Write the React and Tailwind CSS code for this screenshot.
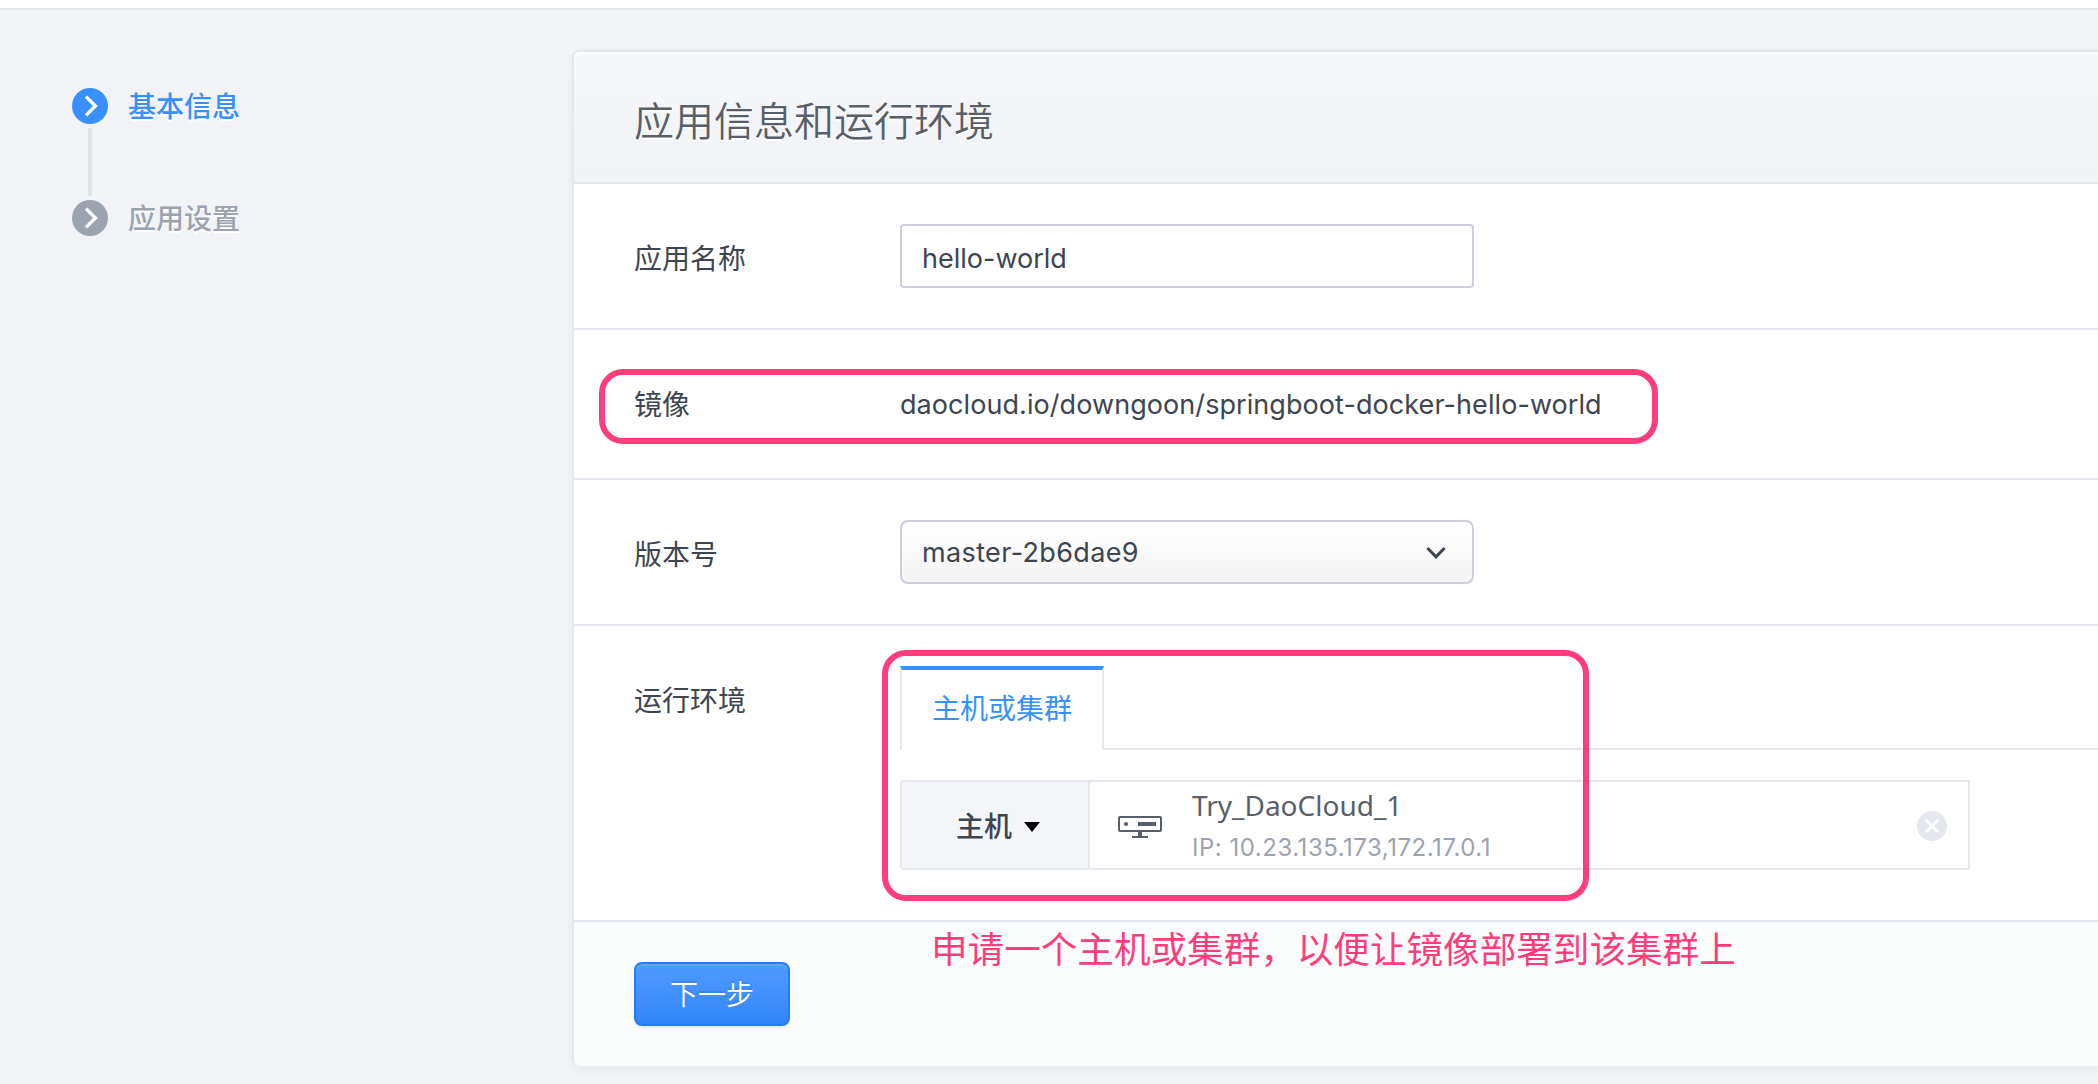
const steps = [
  { label: '基本信息', active: true },
  { label: '应用设置', active: false },
];

function StepIcon({ active }) {
  return (
    <svg width="36" height="36" viewBox="0 0 36 36" className={active ? 'text-[#3890ff]' : 'text-[#9ba3af]'}>
      <circle cx="18" cy="18" r="18" fill="currentColor" />
      <path d="M14 8.6L23.4 18L14 27.4" fill="none" stroke="#fff" strokeWidth="3.4" />
    </svg>
  );
}

function Steps() {
  return (
    <nav className="w-[572px] shrink-0 pl-[72px] pt-[78px]">
      {steps.map((s, i) => (
        <div key={s.label}>
          {i > 0 && <div className="my-1 ml-4 h-[68px] w-1 bg-[#dfe4e8]" />}
          <div className="flex h-9 items-center gap-5">
            <StepIcon active={s.active} />
            <span
              className={
                s.active
                  ? 'pt-0.5 font-medium text-[#3890ff] [text-shadow:0_2px_0_#fff]'
                  : 'pt-0.5 font-medium text-[#9ba3af] [text-shadow:0_2px_0_#fff]'
              }
            >
              {s.label}
            </span>
          </div>
        </div>
      ))}
    </nav>
  );
}

function Row({ label, className, children }) {
  return (
    <div className={`flex border-b-2 border-[#e4e7ed] pl-[60px] ${className}`}>
      <div className="w-[266px] shrink-0">{label}</div>
      {children}
    </div>
  );
}

function HostIcon() {
  return (
    <svg width="44" height="22" viewBox="0 0 44 22" className="mt-1 text-[#595f69]">
      <rect x="1" y="1" width="42" height="14" rx="1" fill="none" stroke="currentColor" strokeWidth="2" />
      <circle cx="8" cy="8" r="2.1" fill="currentColor" />
      <path d="M20 6h18v4H20zM20 16h4v4h-4zM14 20h16v2H14z" fill="currentColor" />
    </svg>
  );
}

export default function App() {
  return (
    <div className="h-[1084px] w-full overflow-hidden bg-[#f1f3f7] font-[Inter,'Noto_Sans_CJK_SC',sans-serif] text-[28px] leading-[40px] text-[#3d4550]">
      <div className="h-[10px] border-b-2 border-[#e4e7ed] bg-white" />
      <div className="flex">
        <Steps />
        <main className="relative mt-10 h-[1016px] flex-1 rounded-l-[8px] border-l-2 border-t-2 border-[#e4e7ed] bg-white shadow-[0_4px_8px_rgba(40,50,90,0.06)]">
          <header className="flex h-[132px] items-center rounded-tl-[6px] border-b-2 border-[#e4e7ed] bg-linear-to-b from-[#f7f8fb] to-[#f0f2f6] pl-[60px] pt-[9px] shadow-[inset_0_2px_0_#fff]">
            <h1 className="text-[40px] font-[350] leading-[60px] text-[#595f69] [text-shadow:0_2px_0_#fff]">应用信息和运行环境</h1>
          </header>

          <Row label={<div className="pt-[5px]">应用名称</div>} className="h-[146px] items-center">
            <div className="flex h-16 w-[574px] items-center rounded-[4px] border-2 border-[#cbcfdb] bg-white px-5 pt-[6px]">
              <span className="text-[27px]">hello-world</span>
            </div>
          </Row>

          <Row label={<div className="pt-[2px]">镜像</div>} className="h-[150px] items-center">
            <span className="pt-0.5 text-[27px] tracking-[0.07px]">daocloud.io/downgoon/springboot-docker-hello-world</span>
          </Row>

          <Row label={<div className="pt-[5px]">版本号</div>} className="h-[146px] items-center">
            <div className="flex h-16 w-[574px] items-center justify-between rounded-[8px] border-2 border-[#cbcfdb] bg-linear-to-b from-white to-[#f4f4f5] pl-5 pr-[26px]">
              <span className="pt-px text-[27px] tracking-[0.36px]">master-2b6dae9</span>
              <svg width="20" height="14" viewBox="0 0 20 14" className="mt-0.5">
                <path d="M1.4 2L10 10.8L18.6 2" fill="none" stroke="#3d4550" strokeWidth="3" />
              </svg>
            </div>
          </Row>

          <Row label={<div className="pt-[55px]">运行环境</div>} className="h-[296px]">
            <div className="min-w-0 flex-1 pt-10">
              <div className="flex h-[84px]">
                <div className="flex w-[204px] justify-center border-x-2 border-t-4 border-x-[#e4e7ed] border-t-[#3890ff] pt-[19px] text-[#3890ff]">
                  主机或集群
                </div>
                <div className="flex-1 border-b-2 border-[#e4e7ed]" />
              </div>
              <div className="mt-[30px] flex h-[90px] w-[1070px] rounded-l-[4px] border-2 border-[#e4e7ed]">
                <div className="flex w-[188px] items-center gap-3 border-r-2 border-[#e4e7ed] bg-[#f5f6fa] pl-[54px] pt-[3px] font-medium">
                  主机
                  <svg width="16" height="10" viewBox="0 0 16 10">
                    <path d="M0 0h16l-8 10z" fill="#000" />
                  </svg>
                </div>
                <div className="flex flex-1 items-center pl-7 pr-[21px]">
                  <HostIcon />
                  <div className="ml-[30px] flex-1 pt-[3px]">
                    <div className="font-['Noto_Sans'] leading-[42px] text-[#595f69]">Try_DaoCloud_1</div>
                    <div className="text-[24px] leading-[43px] tracking-[0.52px] text-[#9ba3af]">IP: 10.23.135.173,172.17.0.1</div>
                  </div>
                  <svg width="30" height="30" viewBox="0 0 30 30" className="mt-0.5">
                    <circle cx="15" cy="15" r="15" fill="#e4e7ed" />
                    <path d="M9 9l12 12M21 9l-12 12" stroke="#fff" strokeWidth="3" />
                  </svg>
                </div>
              </div>
            </div>
          </Row>

          <footer className="h-36 rounded-bl-[8px] bg-[#fbfcfc] pl-[60px] pt-10">
            <button className="flex h-16 w-[156px] items-center justify-center rounded-[8px] border-2 border-[#237df0] bg-linear-to-b from-[#4f9bff] to-[#3385f8] pt-0.5 font-[350] text-white shadow-[inset_0_2px_0_rgba(255,255,255,0.12),0_2px_2px_rgba(0,0,0,0.08)] [text-shadow:0_-2px_0_rgba(0,0,0,0.1)]">
              下一步
            </button>
          </footer>

          <div className="absolute left-[25px] top-[317px] h-[75px] w-[1059px] rounded-[24px] border-[6px] border-[#ff3d7b]" />
          <div className="absolute left-[308px] top-[598px] h-[251px] w-[707px] rounded-[24px] border-[6px] border-[#ff3d7b]" />
          <p className="absolute left-[357px] top-[871px] whitespace-nowrap text-[36.6px] font-normal leading-[54px] text-[#ff3d7b] [text-shadow:0_0_4px_#fff,0_0_4px_#fff,0_0_6px_#fff]">
            申请一个主机或集群，以便让镜像部署到该集群上
          </p>
        </main>
      </div>
    </div>
  );
}
